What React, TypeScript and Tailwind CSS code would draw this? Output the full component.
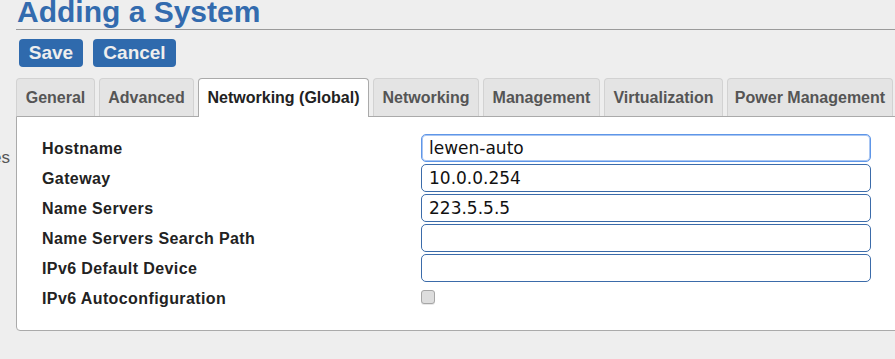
import { useState } from 'react'

const TABS = [
  { label: 'General', width: 'w-[79px]' },
  { label: 'Advanced', width: 'w-[95px]' },
  { label: 'Networking (Global)', width: 'w-[171px]' },
  { label: 'Networking', width: 'w-[106px]' },
  { label: 'Management', width: 'w-[117px]' },
  { label: 'Virtualization', width: 'w-[119px]' },
  { label: 'Power Management', width: 'w-[166px]' },
]

const FIELDS = [
  { key: 'hostname', label: 'Hostname', value: 'lewen-auto' },
  { key: 'gateway', label: 'Gateway', value: '10.0.0.254' },
  { key: 'nameServers', label: 'Name Servers', value: '223.5.5.5' },
  { key: 'searchPath', label: 'Name Servers Search Path', value: '' },
  { key: 'ipv6Device', label: 'IPv6 Default Device', value: '' },
]

export default function App() {
  const [active, setActive] = useState('Networking (Global)')
  const [values, setValues] = useState<Record<string, string>>(
    Object.fromEntries(FIELDS.map((f) => [f.key, f.value])),
  )
  const [autoconf, setAutoconf] = useState(false)

  return (
    <div className="h-[359px] w-[895px] overflow-hidden bg-[#eeeeee] font-['Liberation_Sans',Arial,sans-serif]">
      {/* Header */}
      <div className="pl-4">
        <h1 className="-mt-[3px] border-b border-[#9a9a9a] pb-[2px] pl-px text-[30px] font-bold leading-[30px] text-[#336bae]">
          Adding a System
        </h1>
        <div className="mt-[9px] flex gap-[10px] pl-[3px]">
          <button className="h-[28px] w-[64px] rounded-[4px] bg-[#2f6aad] text-[19px] font-bold leading-[28px] text-[#eeeeee]">
            Save
          </button>
          <button className="h-[28px] w-[83px] rounded-[4px] bg-[#2f6aad] text-[19px] font-bold leading-[28px] text-[#eeeeee]">
            Cancel
          </button>
        </div>
      </div>

      <div className="mt-[11px] flex">
        {/* Sidebar (clipped) */}
        <div className="flex w-4 shrink-0 justify-end overflow-hidden pr-[6px] pt-[70px]">
          <span className="whitespace-nowrap text-[17px] leading-[20px] text-[#555555]">Profiles</span>
        </div>

        <div className="w-[900px] shrink-0">
          {/* Tabs */}
          <div className="relative z-10 flex items-end gap-1">
            {TABS.map((t) => {
              const isActive = t.label === active
              return (
                <button
                  key={t.label}
                  onClick={() => setActive(t.label)}
                  className={
                    isActive
                      ? `${t.width} -mb-px h-[39px] shrink-0 rounded-t-[4px] border border-b-0 border-[#aaaaaa] bg-white pb-px text-[16px] font-bold text-[#222222]`
                      : `${t.width} h-[38px] shrink-0 rounded-t-[4px] border border-b-0 border-[#d2d2d2] bg-[#e4e4e4] text-[16px] font-bold text-[#555555]`
                  }
                >
                  {t.label}
                </button>
              )
            })}
          </div>

          {/* Panel */}
          <div className="rounded-bl-[4px] border border-[#aaaaaa] bg-white pb-[18px] pl-[25px] pt-[17px]">
            <div className="grid grid-cols-[379px_450px] gap-y-[2px]">
              {FIELDS.map((f, i) => (
                <div key={f.key} className="contents">
                  <div className="flex h-[28px] items-center pt-px text-[16px] font-bold tracking-[0.4px] text-[#222222]">
                    {f.label}
                  </div>
                  <input
                    type="text"
                    value={values[f.key]}
                    onChange={(e) => setValues((v) => ({ ...v, [f.key]: e.target.value }))}
                    className={`h-[28px] w-[450px] rounded-[5px] border bg-white px-[7px] font-['DejaVu_Sans',Verdana,sans-serif] text-[17px] text-[#111111] outline-none ${
                      i === 0
                        ? 'border-[#5e96e8] shadow-[inset_0_0_0_1px_#a9c6f2]'
                        : 'border-[#3b6ba9]'
                    }`}
                  />
                </div>
              ))}
              <div className="flex h-[28px] items-center pt-px text-[16px] font-bold tracking-[0.4px] text-[#222222]">
                IPv6 Autoconfiguration
              </div>
              <div className="flex h-[28px] items-center">
                <button
                  onClick={() => setAutoconf((a) => !a)}
                  className="-mt-[3px] h-[14px] w-[14px] rounded-[3px] border border-[#a6a6a6] bg-[#dddddd] shadow-[0_1px_0_#e8e8e8]"
                  aria-checked={autoconf}
                  role="checkbox"
                />
              </div>
            </div>
          </div>
        </div>
      </div>
    </div>
  )
}
